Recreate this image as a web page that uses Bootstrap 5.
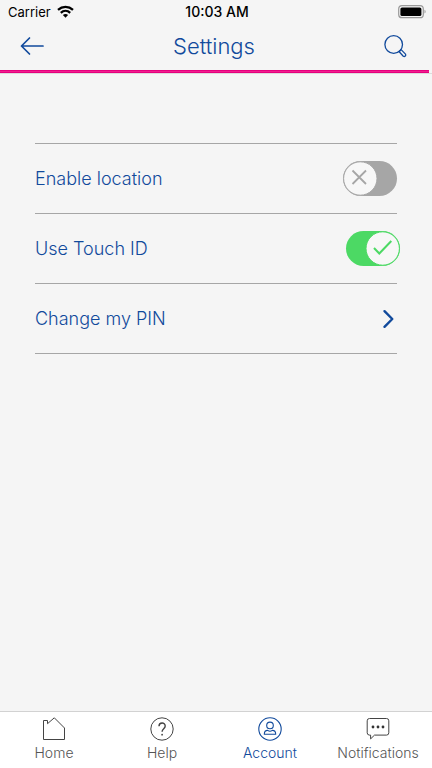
<!DOCTYPE html>
<html lang="en">
<head>
<meta charset="utf-8">
<meta name="viewport" content="width=device-width, initial-scale=1">
<title>Settings</title>
<link href="https://cdn.jsdelivr.net/npm/bootstrap@5.3.0/dist/css/bootstrap.min.css" rel="stylesheet">
<style>
  :root { --brand: #114a9c; --line: #a6a6a6; }
  body { font-family: Inter, "Liberation Sans", sans-serif; font-weight: 300; background: #f5f5f5; color: var(--brand); }
  svg { display: block; fill: none; stroke: currentColor; }
  .status-bar { height: 24px; padding: 0 6px 0 8px; font-size: 13px; line-height: 24px; color: #000; }
  .status-bar .side { flex: 1 1 0; }
  .status-bar .carrier { font-weight: 400; }
  .status-bar .clock { font-size: 14px; font-weight: 500; }
  .app-header { height: 46px; padding: 0 24px 3px 20px; }
  .app-header .side { flex: 1 1 0; }
  .app-header h1 { font-size: 22px; line-height: 28px; font-weight: 300; }
  .plain-btn { color: inherit; background: none; border: 0; padding: 0; }
  .accent-track { border-bottom: 1px solid #dcdcdc; padding-right: 3px; }
  .accent-line { height: 3px; background: #f01f8e; border: solid #e6007e; border-width: 1px 0; }
  .settings { margin: 69px 35px 0; border-top: 1px solid var(--line); }
  .setting { height: 70px; border-bottom: 1px solid var(--line); font-size: 18px; line-height: 24px; font-weight: 300; color: inherit; text-decoration: none; }
  .switch-box { display: grid; width: 54px; height: 35px; color: var(--line); }
  .switch-box.shifted { margin-right: -3px; }
  .switch-box > * { grid-area: 1 / 1; }
  .switch-box input { appearance: none; width: 54px; height: 35px; margin: 0; border-radius: 18px; background: var(--line); cursor: pointer; }
  .switch-box input:checked { background: #4cd964; }
  .switch-box svg { pointer-events: none; stroke: var(--line); }
  .switch-box .on, .switch-box input:checked ~ .off { display: none; }
  .switch-box input:checked ~ .on { display: block; stroke: #4cd964; }
  .chevron { margin-right: 3px; }
  .tab-bar { height: 57px; background: #fff; border-top: 1px solid #d2d2d2; padding-top: 5px; }
  .tab-bar a { flex: 1 1 0; color: #555; font-size: 14px; line-height: 18px; font-weight: 300; text-decoration: none; gap: 3px; }
  .tab-bar svg { stroke: #444; }
  .tab-bar a.current { color: var(--brand); }
  .tab-bar a.current svg { stroke: var(--brand); }
</style>
</head>
<body class="d-flex flex-column min-vh-100">
<div class="status-bar d-flex align-items-center">
  <div class="side d-flex align-items-center">
    <span class="carrier">Carrier</span>
    <svg class="ms-1" width="20" height="14" viewBox="0 0 20 14" stroke-width="2.3" aria-label="Wi-Fi"><path d="M3 4.8C7.3 1 13.7 1 18 4.8M5.8 7.8c2.7-2.5 6.7-2.5 9.4 0"/><path d="M7.9 10.1c1.5-1.4 3.7-1.4 5.2 0L10.5 12.7z" fill="currentColor" stroke="none"/></svg>
  </div>
  <span class="clock">10:03 AM</span>
  <div class="side d-flex justify-content-end">
    <svg width="28" height="14" viewBox="0 0 28 14" aria-label="Battery full"><rect x=".7" y=".7" width="24.6" height="12" rx="3.3" stroke="#999" stroke-width="1.2"/><rect x="2.4" y="2.4" width="21" height="8.6" rx="1.6" fill="#000" stroke="none"/><path d="M26.5 4.8c1.5.6 1.5 3.2 0 3.8z" fill="#999" stroke="none"/></svg>
  </div>
</div>
<header class="app-header d-flex align-items-center">
  <div class="side d-flex"><button type="button" class="plain-btn" aria-label="Back"><svg width="25" height="20" viewBox="0 0 25 20" stroke-width="1.7" stroke-linecap="round" stroke-linejoin="round"><path d="M23 10H1.5M9.5 2l-8 8 8 8"/></svg></button></div>
  <h1 class="mb-0">Settings</h1>
  <div class="side d-flex justify-content-end"><button type="button" class="plain-btn" aria-label="Search"><svg width="24" height="24" viewBox="0 0 24 24" stroke-width="1.3"><circle cx="9.7" cy="10.5" r="8.8"/><path d="M15.2 17.5l1.9-1.9 4.4 4.5a1.6 1.6 0 0 1-2.2 2.2L15.2 17.8z" stroke-linejoin="round"/></svg></button></div>
</header>
<div class="accent-track"><div class="accent-line"></div></div>
<main class="flex-grow-1">
  <div class="settings">
    <div class="setting d-flex align-items-center justify-content-between">
      <label for="location">Enable location</label>
      <div class="switch-box">
        <input type="checkbox" role="switch" id="location">
        <svg class="off" width="54" height="35" viewBox="0 0 54 35"><circle cx="17.3" cy="17.5" r="16.7" fill="#f7f7f7"/><path d="M9.5 9.5l13.5 13.5M23 9.5L9.5 23" stroke-width="1.8"/></svg>
        <svg class="on" width="54" height="35" viewBox="0 0 54 35"><circle cx="36.7" cy="17.5" r="16.7" fill="#f7f7f7"/><path d="M28 17l5.3 5.5L45.3 10" stroke-width="2"/></svg>
      </div>
    </div>
    <div class="setting d-flex align-items-center justify-content-between">
      <label for="touch-id">Use Touch ID</label>
      <div class="switch-box shifted">
        <input type="checkbox" role="switch" id="touch-id" checked>
        <svg class="off" width="54" height="35" viewBox="0 0 54 35"><circle cx="17.3" cy="17.5" r="16.7" fill="#f7f7f7"/><path d="M9.5 9.5l13.5 13.5M23 9.5L9.5 23" stroke-width="1.8"/></svg>
        <svg class="on" width="54" height="35" viewBox="0 0 54 35"><circle cx="36.7" cy="17.5" r="16.7" fill="#f7f7f7"/><path d="M28 17l5.3 5.5L45.3 10" stroke-width="2"/></svg>
      </div>
    </div>
    <a href="#pin" class="setting d-flex align-items-center justify-content-between">
      <span>Change my PIN</span>
      <svg class="chevron" width="12" height="20" viewBox="0 0 12 20" stroke-width="2.4" stroke-linejoin="round" stroke-linecap="round"><path d="M2.5 2.2l7.8 7.8-7.8 7.8"/></svg>
    </a>
  </div>
</main>
<nav class="tab-bar d-flex">
  <a href="#home" class="d-flex flex-column align-items-center"><svg width="24" height="24" viewBox="0 0 24 24"><path d="M1.5 22.5v-19h4v3.2L12.3.8 22.5 11v11.5z"/></svg>Home</a>
  <a href="#help" class="d-flex flex-column align-items-center"><svg width="24" height="24" viewBox="0 0 24 24"><circle cx="12" cy="12" r="11.2"/><path d="M9 9.2C9 4.9 15.2 5 15.2 8.9c0 2.8-3.1 2.8-3.1 5.9" stroke-width="1.4"/><circle cx="12.1" cy="17.7" r=".9" fill="#444" stroke="none"/></svg>Help</a>
  <a href="#account" class="current d-flex flex-column align-items-center" aria-current="page"><svg width="24" height="24" viewBox="0 0 24 24" stroke-width="1.1"><circle cx="12" cy="12" r="11.2"/><circle cx="12" cy="8.4" r="3.3"/><path d="M6.3 17.2c0-2.6 1.6-3.8 3.4-3.8 1.4 1 3.2 1 4.6 0 1.8 0 3.4 1.2 3.4 3.8z" stroke-linejoin="round"/></svg>Account</a>
  <a href="#notifications" class="d-flex flex-column align-items-center"><svg width="24" height="24" viewBox="0 0 24 24"><path d="M3.5 1.5h17a2.3 2.3 0 0 1 2.3 2.3v12a2.3 2.3 0 0 1-2.3 2.3H8.5L4.6 21.9v-3.8H3.3a2.3 2.3 0 0 1-2.1-2.3v-12a2.3 2.3 0 0 1 2.3-2.3z"/><g fill="#333" stroke="none"><circle cx="7" cy="10" r="1.4"/><circle cx="12" cy="10" r="1.4"/><circle cx="17" cy="10" r="1.4"/></g></svg>Notifications</a>
</nav>
<script src="https://cdn.jsdelivr.net/npm/bootstrap@5.3.0/dist/js/bootstrap.bundle.min.js"></script>
</body>
</html>
